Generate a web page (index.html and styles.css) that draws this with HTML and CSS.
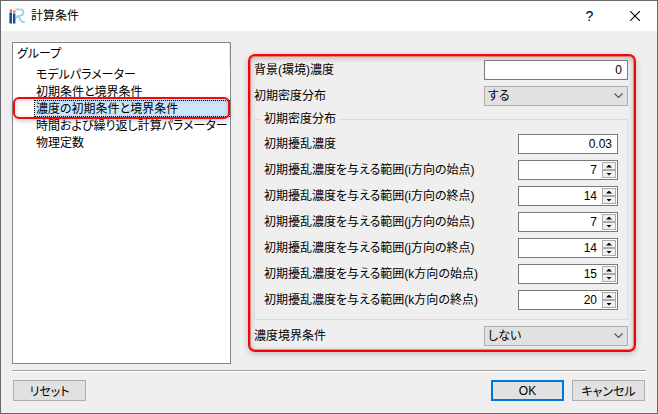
FILE: index.html
```html
<!DOCTYPE html>
<html lang="ja">

<head>
    <meta charset="UTF-8">
    <meta name="viewport" content="width=device-width, initial-scale=1.0">
    <title>計算条件</title>
    <link rel="stylesheet" href="styles.css">
</head>

<body>
    <div class="dialog">
        <header class="titlebar">
            <svg class="logo" viewBox="0 0 16 16" width="16" height="16">
                <path d="M6.4 1.4H11C15.6 1.4 15.4 7.2 11.4 7.6C8.6 7.8 7 8.6 7.6 10.4M9.8 8C10.8 12 12.4 14.8 15.8 13.8" fill="none" stroke="#8fd3e4" stroke-width="1.8" />
                <path d="M.4 4.6H3V15.4H.4zM4 5.4H6.4V15.4H4z" fill="#1b5088" />
                <path d="M.8 1.4H3V3.8H.8zM4.2 2.4H6.4V4.6H4.2z" fill="#e8505c" />
            </svg>
            <h1 class="title">計算条件</h1>
            <button class="title-btn" type="button" aria-label="ヘルプ">?</button>
            <button class="title-btn" type="button" aria-label="閉じる">
                <svg viewBox="0 0 10 10" width="10" height="10">
                    <path d="M0 0L10 10M10 0L0 10" stroke="#000" stroke-width="1.1" />
                </svg>
            </button>
        </header>

        <main class="main">
            <nav class="tree">
                <div class="tree-header">グループ</div>
                <ul class="tree-list">
                    <li><a class="tree-item" href="#">モデルパラメーター</a></li>
                    <li><a class="tree-item" href="#">初期条件と境界条件</a></li>
                    <li class="selected"><a class="tree-item" href="#">濃度の初期条件と境界条件</a></li>
                    <li><a class="tree-item" href="#">時間および繰り返し計算パラメーター</a></li>
                    <li><a class="tree-item" href="#">物理定数</a></li>
                </ul>
            </nav>

            <form class="form" id="form">
                <div class="row">
                    <label for="background">背景(環境)濃度</label>
                    <input class="input wide" type="text" id="background" value="0">
                </div>
                <div class="row">
                    <label for="density">初期密度分布</label>
                    <select class="select wide" id="density">
                        <option selected>する</option>
                        <option>しない</option>
                    </select>
                </div>
                <fieldset class="group">
                    <legend>初期密度分布</legend>
                    <div class="rows">
                        <div class="row">
                            <label for="disturb">初期擾乱濃度</label>
                            <input class="input narrow" type="text" id="disturb" value="0.03">
                        </div>
                        <div class="row">
                            <label for="i-start">初期擾乱濃度を与える範囲(i方向の始点)</label>
                            <div class="spin narrow">
                                <input type="text" inputmode="numeric" id="i-start" value="7">
                                <div class="spin-btns">
                                    <button class="up" type="button" aria-label="増やす"></button>
                                    <button class="down" type="button" aria-label="減らす"></button>
                                </div>
                            </div>
                        </div>
                        <div class="row">
                            <label for="i-end">初期擾乱濃度を与える範囲(i方向の終点)</label>
                            <div class="spin narrow">
                                <input type="text" inputmode="numeric" id="i-end" value="14">
                                <div class="spin-btns">
                                    <button class="up" type="button" aria-label="増やす"></button>
                                    <button class="down" type="button" aria-label="減らす"></button>
                                </div>
                            </div>
                        </div>
                        <div class="row">
                            <label for="j-start">初期擾乱濃度を与える範囲(j方向の始点)</label>
                            <div class="spin narrow">
                                <input type="text" inputmode="numeric" id="j-start" value="7">
                                <div class="spin-btns">
                                    <button class="up" type="button" aria-label="増やす"></button>
                                    <button class="down" type="button" aria-label="減らす"></button>
                                </div>
                            </div>
                        </div>
                        <div class="row">
                            <label for="j-end">初期擾乱濃度を与える範囲(j方向の終点)</label>
                            <div class="spin narrow">
                                <input type="text" inputmode="numeric" id="j-end" value="14">
                                <div class="spin-btns">
                                    <button class="up" type="button" aria-label="増やす"></button>
                                    <button class="down" type="button" aria-label="減らす"></button>
                                </div>
                            </div>
                        </div>
                        <div class="row">
                            <label for="k-start">初期擾乱濃度を与える範囲(k方向の始点)</label>
                            <div class="spin narrow">
                                <input type="text" inputmode="numeric" id="k-start" value="15">
                                <div class="spin-btns">
                                    <button class="up" type="button" aria-label="増やす"></button>
                                    <button class="down" type="button" aria-label="減らす"></button>
                                </div>
                            </div>
                        </div>
                        <div class="row">
                            <label for="k-end">初期擾乱濃度を与える範囲(k方向の終点)</label>
                            <div class="spin narrow">
                                <input type="text" inputmode="numeric" id="k-end" value="20">
                                <div class="spin-btns">
                                    <button class="up" type="button" aria-label="増やす"></button>
                                    <button class="down" type="button" aria-label="減らす"></button>
                                </div>
                            </div>
                        </div>
                    </div>
                </fieldset>
                <div class="row">
                    <label for="boundary">濃度境界条件</label>
                    <select class="select wide" id="boundary">
                        <option>する</option>
                        <option selected>しない</option>
                    </select>
                </div>
            </form>
        </main>

        <footer class="footer">
            <button class="btn reset" type="reset" form="form">リセット</button>
            <button class="btn ok" type="submit" form="form">OK</button>
            <button class="btn" type="button">キャンセル</button>
        </footer>
    </div>
</body>

</html>
```
FILE: styles.css
```css
* {
    margin: 0;
    padding: 0;
    box-sizing: border-box;
}

body,
input,
select,
button {
    font-family: "Liberation Sans", "Noto Sans CJK JP", sans-serif;
    font-size: 12px;
    font-feature-settings: "palt";
    color: #000;
}

.dialog {
    display: flex;
    flex-direction: column;
    min-height: 100vh;
    border: 1px solid #6a6a6a;
    background-color: #efefef;
    line-height: 14px;
}

/* title bar */
.titlebar {
    display: flex;
    align-items: center;
    height: 30px;
    padding-left: 8px;
    background-color: white;
}

.title {
    flex: 1;
    margin-left: 6px;
    font-size: 12px;
    font-weight: normal;
}

.title-btn {
    display: flex;
    align-items: center;
    justify-content: center;
    width: 45px;
    height: 30px;
    border: none;
    background: none;
    font-size: 14px;
}

.main {
    display: flex;
    align-items: stretch;
    gap: 17px;
    padding: 11px 21px 0 11px;
}

/* group list */
.tree {
    flex: 0 0 219px;
    min-height: 322px;
    border: 1px solid #828790;
    background-color: white;
}

.tree-header {
    height: 23px;
    padding-left: 4px;
    border-right: 1px solid #e5e5e5;
    line-height: 23px;
}

.tree-list {
    list-style: none;
}

.tree-list li {
    height: 17px;
    padding-left: 21px;
}

.tree-item {
    display: block;
    height: 17px;
    padding-left: 1px;
    border: 1px solid transparent;
    line-height: 17px;
    color: #000;
    text-decoration: none;
    white-space: nowrap;
}

.selected {
    position: relative;
}

.selected .tree-item {
    border: 1px dotted #000;
    background-color: #cbe6fc;
}

/* red marker over the selected row */
.selected::after {
    content: "";
    position: absolute;
    inset: -3px 0 -2px 0;
    border: 2px solid #f40808;
    border-radius: 6px;
    box-shadow: 0 2px 5px rgba(0, 0, 0, 0.2), inset 0 1px 5px rgba(0, 0, 0, 0.2);
    pointer-events: none;
}

/* settings */
.form {
    flex: 1;
    align-self: flex-start;
    display: flex;
    flex-direction: column;
    gap: 6px;
    margin-top: 12px;
    padding: 4px 6px 4px 4px;
    border: 2px solid #f80404;
    border-radius: 7px;
    box-shadow: 0 2px 6px rgba(0, 0, 0, 0.2), inset 0 0 0 1px rgba(230, 60, 60, 0.5), inset 0 2px 6px rgba(0, 0, 0, 0.25);
}

.rows {
    display: flex;
    flex-direction: column;
    gap: 6px;
}

.row {
    display: flex;
    align-items: center;
    justify-content: space-between;
    height: 20px;
}

.wide {
    width: 144px;
}

.narrow {
    width: 100px;
}

.input {
    height: 20px;
    padding: 0 5px;
    border: 1px solid #7a7a7a;
    background-color: white;
    text-align: right;
    outline: none;
}

.select {
    height: 20px;
    padding: 0 20px 0 3px;
    border: 1px solid #adadad;
    border-radius: 0;
    appearance: none;
    background: #e1e1e1 url("data:image/svg+xml,%3Csvg xmlns='http://www.w3.org/2000/svg' width='9' height='6'%3E%3Cpath d='M.5 .5L4.5 4.5L8.5 .5' fill='none' stroke='%23555' stroke-width='1.2'/%3E%3C/svg%3E") no-repeat right 4px center;
}

.group {
    min-width: 0;
    padding: 8px 9px 9px;
    border: 1px solid #dcdcdc;
}

.group legend {
    height: 14px;
    margin-left: -3px;
    padding: 0 3px;
}

.spin {
    display: flex;
    height: 20px;
    padding: 1px;
    border: 1px solid #7a7a7a;
    background-color: white;
}

.spin input {
    flex: 1;
    min-width: 0;
    padding-right: 5px;
    border: none;
    background: none;
    text-align: right;
    outline: none;
}

.spin-btns {
    display: flex;
    flex-direction: column;
    width: 14px;
}

.spin-btns button {
    display: flex;
    align-items: center;
    justify-content: center;
    flex: 1;
    border: 1px solid #adadad;
    background-color: #f0f0f0;
}

.spin-btns button::before {
    content: "";
    width: 6px;
    height: 3px;
    background-color: #000;
}

.up::before {
    clip-path: polygon(50% 0, 100% 100%, 0 100%);
}

.down::before {
    clip-path: polygon(0 0, 100% 0, 50% 100%);
}

/* bottom buttons */
.footer {
    display: flex;
    gap: 8px;
    margin: 6px 11px 0;
    padding: 9px 1px 0;
    border-top: 1px solid #a0a0a0;
    box-shadow: inset 0 1px 0 white;
}

.btn {
    width: 73px;
    height: 21px;
    border: 1px solid #adadad;
    background-color: #e1e1e1;
}

.reset {
    margin-right: auto;
}

.ok {
    border: 2px solid #0078d7;
}
```
